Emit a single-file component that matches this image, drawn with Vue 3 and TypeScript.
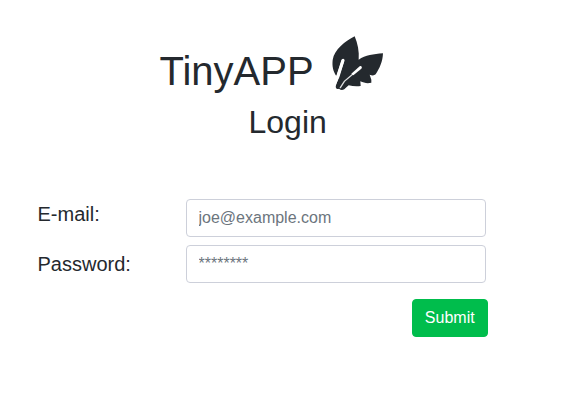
<script setup lang="ts">
import { ref } from 'vue'

const email = ref<string>('')
const password = ref<string>('')
</script>

<template>
  <main class="page">
    <header class="header">
      <h1 class="brand">
        <span>TinyAPP</span>
        <svg class="leaf" viewBox="36 33 156 165" aria-hidden="true">
          <path
            fill="#24292e"
            d="M104 34C76 49 43 73 38 105C36 124 39 138 49 153L64 106C65 100 74 102 73 108L48 181C45 190 51 194 57 191C63 197 71 196 76 190L86 181C98 184 111 185 122 183L121 169C132 174 143 176 154 173L154 164L149 149C156 152 163 152 167 148C179 130 188 110 189 85C160 87 137 91 116 104C118 79 113 55 104 34Z"
          />
          <path fill="#fff" d="M66 103C69 99 75 102 73 108L58 157L48 178L45 160L50 151Z" />
          <path fill="#fff" d="M119 124C124 121 128 127 124 131L100 151L94 146Z" />
          <path fill="none" stroke="#fff" stroke-opacity="0.85" stroke-width="4" stroke-linecap="round" d="M98 148L73 169L61 188" />
        </svg>
      </h1>
      <h2 class="title">Login</h2>
    </header>
    <form class="form" @submit.prevent>
      <div class="row">
        <label for="email">E-mail:</label>
        <input id="email" v-model="email" type="email" placeholder="joe@example.com" />
      </div>
      <div class="row">
        <label class="password-label" for="password">Password:</label>
        <input id="password" v-model="password" type="password" placeholder="********" />
      </div>
      <button type="submit">Submit</button>
    </form>
  </main>
</template>

<style>
body {
  background: #fff;
}
</style>

<style scoped>
.page {
  box-sizing: border-box;
  height: 417px;
  padding-top: 36px;
  color: #24292e;
  font-family: "Liberation Sans", Arial, sans-serif;
  font-size: 16px;
}
.header {
  height: 163px;
}
.brand,
.title {
  margin: 0;
  font-weight: 500;
}
.brand {
  display: flex;
  padding-left: 159.5px;
  font-size: 40px;
  line-height: 48px;
}
.brand span {
  width: 172.5px;
  padding-top: 11px;
}
.leaf {
  display: block;
  width: 52px;
  height: 55px;
}
.title {
  padding: 8px 0 0 248.5px;
  font-size: 32px;
  line-height: 38.4px;
}
.form {
  display: flex;
  flex-direction: column;
  width: 450.5px;
  padding-left: 37.5px;
}
.row {
  display: flex;
  height: 46px;
}
label {
  width: 148.5px;
  padding-top: 3px;
  font-size: 20px;
  line-height: 24px;
}
.password-label {
  padding-top: 7px;
}
input {
  box-sizing: border-box;
  width: 300px;
  height: 38px;
  margin: 0;
  padding: 6px 12px 6px 11.5px;
  border: 1px solid #cdd0da;
  border-radius: 4px;
  background: #fff;
  color: #495057;
  font: inherit;
  line-height: 24px;
}
input::placeholder {
  color: #6c757d;
  opacity: 1;
}
button {
  align-self: flex-end;
  box-sizing: border-box;
  width: 76px;
  height: 38px;
  margin: 8px 0 0;
  padding: 6px 12px 6px 11.5px;
  border: 1px solid #00bd4c;
  border-radius: 4px;
  background: #00bd4c;
  color: #fff;
  font: inherit;
  line-height: 24px;
}
</style>
